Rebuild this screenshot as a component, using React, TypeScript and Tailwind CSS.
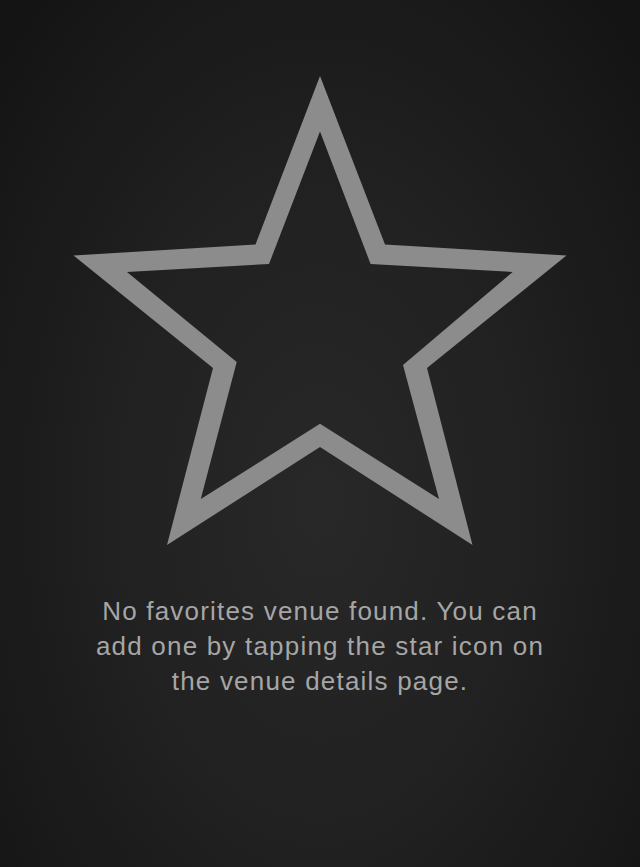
export default function App() {
  return (
    <div className="flex min-h-[867px] w-full flex-col items-center bg-[radial-gradient(ellipse_at_50%_58%,#282828_0%,#212121_45%,#131313_100%)] font-['Liberation_Sans',Arial,sans-serif]">
      <svg
        className="mt-[76px] block"
        width="494"
        height="470"
        viewBox="73 76 494 470"
        aria-hidden
      >
        <path
          fill="#8c8c8c"
          fillRule="evenodd"
          d="M320 76 L385 244.5 L566.5 255.5 L427 368 L472.5 545 L320 447 L167 545 L213 368 L73.5 255.5 L255.5 244.5 Z
             M320 131.6 L370.6 264 L512.6 272 L403 365 L439 499 L320 423.7 L200.8 499 L236.7 362 L127 272 L269 264 Z"
        />
      </svg>
      <p className="mt-[48px] w-[472px] text-center text-[26px] leading-[35px] tracking-[1.2px] text-[#a6a6a6]">
        No favorites venue found. You can add one by tapping the star icon on the venue details page.
      </p>
    </div>
  )
}
